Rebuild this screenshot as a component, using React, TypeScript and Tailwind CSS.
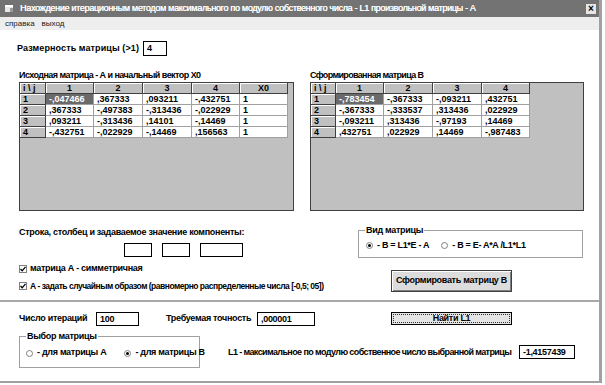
import React from "react";

const A = [
  ["-,047466", ",367333", ",093211", "-,432751", "1"],
  [",367333", "-,497383", "-,313436", "-,022929", "1"],
  [",093211", "-,313436", ",14101", "-,14469", "1"],
  ["-,432751", "-,022929", "-,14469", ",156563", "1"],
];

const B = [
  ["-,783454", "-,367333", "-,093211", ",432751"],
  ["-,367333", "-,333537", ",313436", ",022929"],
  ["-,093211", ",313436", "-,97193", ",14469"],
  [",432751", ",022929", ",14469", "-,987483"],
];

function Grid({ cols, heads, rows, cls }: { cols: string; heads: string[]; rows: string[][]; cls: string }) {
  return (
    <div className={`h-[129px] border border-[#404040] bg-[#c0c0c0] ${cls}`}>
      <div className={`grid ${cols}`}>
        {["i \\ j", ...heads].map((h, i) => (
          <div
            key={h}
            className={`h-[11px] bg-[#c0c0c0] border-r border-b border-[#404040] shadow-[inset_1px_1px_0_#ffffff] text-[9px] leading-[10px] font-bold ${i === 0 ? "pl-[3px]" : "text-center"}`}
          >
            {h}
          </div>
        ))}
        {rows.map((r, ri) => (
          <React.Fragment key={ri}>
            <div className="h-[11px] bg-[#c0c0c0] border-r border-b border-[#404040] shadow-[inset_1px_1px_0_#ffffff] text-[9px] leading-[10px] font-bold pl-[3px]">
              {ri + 1}
            </div>
            {r.map((v, ci) => (
              <div
                key={ci}
                className={`h-[11px] border-r border-b border-[#a0a0a0] text-[9px] leading-[10px] font-bold pl-[3px] ${ri === 0 && ci === 0 ? "bg-[#6a6a6a] text-white" : "bg-white text-black"}`}
              >
                {v}
              </div>
            ))}
          </React.Fragment>
        ))}
      </div>
    </div>
  );
}

function Box({ w, children, cls = "" }: { w: string; children?: React.ReactNode; cls?: string }) {
  return (
    <div className={`${w} h-[14px] bg-white border border-black text-[9px] leading-[12px] font-bold pl-[3px] shrink-0 ${cls}`}>
      {children}
    </div>
  );
}

function Radio({ on }: { on?: boolean }) {
  return (
    <span className="w-[7px] h-[7px] rounded-full border border-[#808080] bg-white flex items-center justify-center">
      {on && <span className="w-[3px] h-[3px] rounded-full bg-black" />}
    </span>
  );
}

function Check() {
  return (
    <svg width="8" height="8" viewBox="0 0 8 8" className="shrink-0">
      <rect x="0.5" y="0.5" width="7" height="7" fill="#fff" stroke="#808080" />
      <path d="M1.5 4 L3.2 5.8 L6.5 1.8" fill="none" stroke="#000" strokeWidth="1.3" />
    </svg>
  );
}

export default function App() {
  return (
    <div className="w-[605px] h-[385px] bg-white font-['Liberation_Sans',Arial,sans-serif] text-black overflow-hidden">
      <div className="w-[602px] h-[383px] border-r-[3px] border-b-[2px] border-[#a0a0a0] flex flex-col">
        {/* title bar */}
        <div className="h-[17px] bg-[#737373] flex items-center pl-[5px] pr-[3px] shrink-0">
          <svg width="8" height="7" viewBox="0 0 8 7" className="mr-[7px]">
            <rect x="0" y="0" width="8" height="7" fill="#e8e8e8" />
            <rect x="0" y="0" width="8" height="2" fill="#ffffff" />
            <rect x="5" y="3" width="3" height="4" fill="#9a9a9a" />
          </svg>
          <span className="text-white text-[9px] tracking-[-0.3px] whitespace-nowrap [text-shadow:0.3px_0_0_#fff]">
            Нахождение итерационным методом максимального по модулю собственного числа - L1 произвольной матрицы - А
          </span>
          <div className="ml-auto w-[10px] h-[10px] bg-[#e6e6e6] flex items-center justify-center text-[10px] leading-none font-bold">
            ×
          </div>
        </div>

        {/* menu */}
        <div className="h-[13px] bg-[#eeeeee] flex items-center gap-[7px] pl-[5px] text-[8px] text-[#222] shrink-0">
          <span>справка</span>
          <span>выход</span>
        </div>

        {/* size */}
        <div className="flex items-center pl-[17px] mt-[11px] h-[15px]">
          <span className="text-[9px] font-bold tracking-[0.1px]">Размерность матрицы (&gt;1)</span>
          <Box w="w-[24px]" cls="ml-[4px] h-[15px]">4</Box>
        </div>

        {/* grids */}
        <div className="flex mt-[14px] pl-[19px] gap-[16px]">
          <div className="flex flex-col">
            <div className="h-[12px] text-[9px] font-bold tracking-[-0.55px] leading-[10px]">
              Исходная матрица - А и начальный вектор X0
            </div>
            <Grid cols="grid-cols-[26px_48px_49px_49px_48px_48px]" heads={["1", "2", "3", "4", "X0"]} rows={A} cls="w-[275px]" />
          </div>
          <div className="flex flex-col">
            <div className="h-[12px] text-[9px] font-bold tracking-[-0.65px] leading-[10px]">
              Сформированная матрица B
            </div>
            <Grid cols="grid-cols-[25px_48px_49px_49px_48px]" heads={["1", "2", "3", "4"]} rows={B} cls="w-[274px]" />
          </div>
        </div>

        {/* lower controls */}
        <div className="flex h-[89px]">
          <div className="w-[358px] pl-[19px] flex flex-col whitespace-nowrap">
            <div className="mt-[16px] text-[9px] font-bold tracking-[-0.3px] leading-[10px]">
              Строка, столбец и задаваемое значение компоненты:
            </div>
            <div className="flex mt-[6px] pl-[105px] gap-[10px]">
              <Box w="w-[28px]" cls="border-[#606060]" />
              <Box w="w-[28px]" cls="border-[#606060]" />
              <Box w="w-[43px]" cls="border-[#606060]" />
            </div>
            <div className="flex items-center gap-[3px] mt-[7px] h-[10px] text-[9px] font-bold tracking-[-0.3px]">
              <Check />
              <span>матрица А - симметричная</span>
            </div>
            <div className="flex items-center gap-[3px] mt-[7px] h-[10px] text-[8.5px] font-bold tracking-[-0.5px]">
              <Check />
              <span>А - задать случайным образом (равномерно распределенные числа [-0,5; 05])</span>
            </div>
          </div>
          <div className="flex flex-col">
            <div className="relative mt-[19px] w-[225px] h-[28px] border border-[#a0a0a0] flex items-end pb-[5px] pl-[7px] text-[9px] font-bold tracking-[-0.3px]">
              <span className="absolute left-[6px] -top-[6px] bg-white px-[1px] leading-[10px]">Вид матрицы</span>
              <div className="flex items-center gap-[4px]">
                <Radio on />
                <span>- B = L1*E - A</span>
              </div>
              <div className="flex items-center gap-[4px] ml-[12px]">
                <Radio />
                <span>- B = E- A*A /L1*L1</span>
              </div>
            </div>
            <div className="ml-[33px] mt-[12px] w-[121px] h-[22px] bg-[#dcdcdc] border border-[#404040] shadow-[inset_1px_1px_0_#ffffff,inset_-1px_-1px_0_#808080] flex items-center justify-center text-[9px] font-bold tracking-[-0.3px]">
              Сформировать матрицу B
            </div>
          </div>
        </div>

        {/* separator */}
        <div className="h-[2px] bg-[#a8a8a8] shrink-0" />

        {/* bottom */}
        <div className="flex items-center mt-[10px] pl-[19px] h-[13px] text-[9px] font-bold tracking-[-0.3px] whitespace-nowrap">
          <span className="w-[77px]">Число итераций</span>
          <Box w="w-[43px]" cls="h-[13px] leading-[11px]">100</Box>
          <span className="ml-[27px] w-[91px]">Требуемая точность</span>
          <Box w="w-[58px]" cls="h-[13px] leading-[11px]">,000001</Box>
          <div className="ml-[76px] w-[121px] h-[13px] bg-[#e4e4e4] border border-black flex items-center justify-center p-[1px]">
            <div className="w-full h-full border border-dotted border-[#333] flex items-center justify-center leading-none">
              Найти L1
            </div>
          </div>
        </div>

        <div className="flex items-center mt-[11px] pl-[19px] text-[9px] font-bold tracking-[-0.3px] whitespace-nowrap">
          <div className="relative w-[181px] h-[32px] border border-[#a0a0a0] flex items-center pt-[2px] pl-[6px] shrink-0">
            <span className="absolute left-[6px] -top-[6px] bg-white px-[1px] leading-[10px]">Выбор матрицы</span>
            <div className="flex items-center gap-[4px]">
              <Radio />
              <span>- для матрицы А</span>
            </div>
            <div className="flex items-center gap-[4px] ml-[18px]">
              <Radio on />
              <span>- для матрицы B</span>
            </div>
          </div>
          <span className="ml-[28px] pt-[1px] tracking-[-0.6px]">L1 - максимальное по модулю собственное число выбранной матрицы</span>
          <Box w="w-[56px]" cls="ml-auto mr-[24px]">-1,4157439</Box>
        </div>
      </div>
    </div>
  );
}
